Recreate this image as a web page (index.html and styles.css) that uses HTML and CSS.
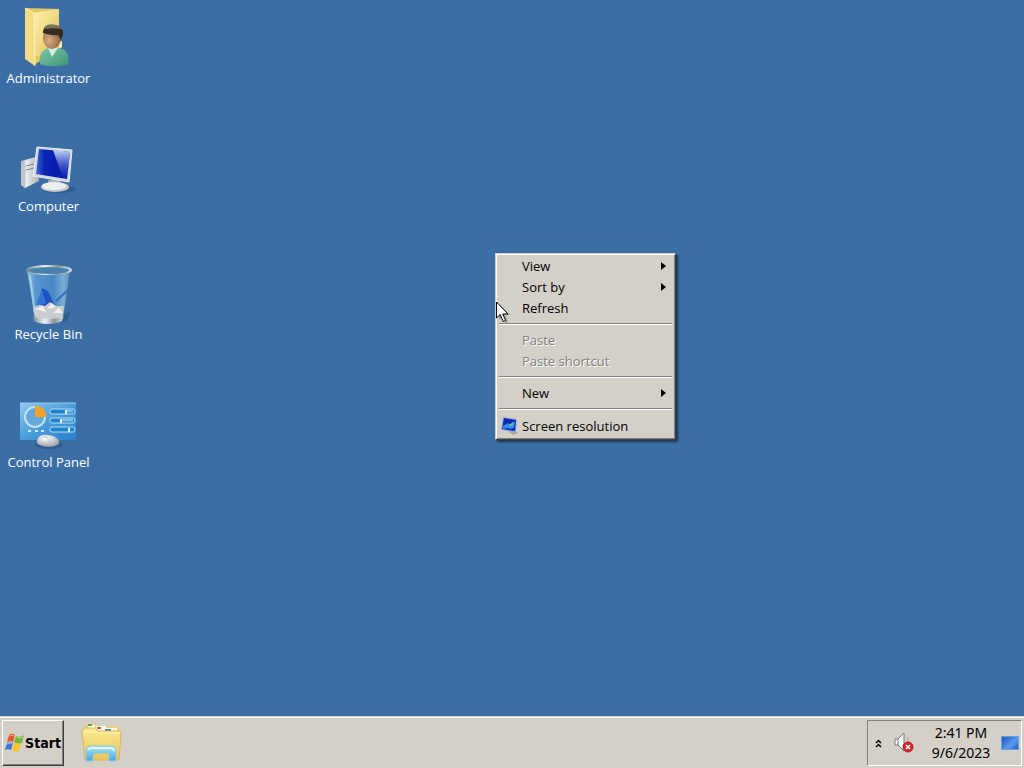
FILE: index.html
```
<!DOCTYPE html>
<html lang="en">
<head>
    <meta charset="UTF-8">
    <meta name="viewport" content="width=device-width, initial-scale=1.0">
    <title>Desktop</title>
    <link rel="stylesheet" href="styles.css">
</head>
<body>
    <main class="desktop">
        <button class="shortcut">
            <svg width="64" height="64" viewBox="1 0 64 64">
                <defs>
                    <linearGradient id="folder" x1="0" y1="0" x2="1" y2="1">
                        <stop offset="0" stop-color="#fff3b4"/>
                        <stop offset="1" stop-color="#e3bd55"/>
                    </linearGradient>
                    <linearGradient id="shirt" x1="0" y1="0" x2="1" y2="1">
                        <stop offset="0" stop-color="#7cc8a8"/>
                        <stop offset="1" stop-color="#3f9275"/>
                    </linearGradient>
                    <radialGradient id="face" cx=".35" cy=".6" r=".7">
                        <stop offset="0" stop-color="#d9ab80"/>
                        <stop offset="1" stop-color="#8a5c3c"/>
                    </radialGradient>
                </defs>
                <path d="M9 4l34 1v43l-24 12-10-7z" fill="#e6c766"/>
                <path d="M17 9l26-4v47H18z" fill="url(#folder)"/>
                <path d="M43 38l3-1v6l-3 2z" fill="#f6ecb0"/>
                <path d="M24 60c-2-10 3-15 9-16h9c8 1 12 6 10 16-7 3-21 3-28 0z" fill="url(#shirt)"/>
                <path d="M32 44l4 9 6-9z" fill="#d7ece9"/>
                <ellipse cx="36" cy="34" rx="9" ry="11" fill="url(#face)"/>
                <path d="M27 29c0-7 5-9 10-8 7 0 11 4 10 10l-2 5-3-5c-5 1-11-1-15-2z" fill="#352b20"/>
                <path d="M28 25c3-6 14-6 18 0-6-1-12-1-18 0z" fill="#77715f"/>
                <path d="M9 4l9 5 1 53-10-7z" fill="#f3dc84"/>
                <path d="M9 4l9 5 1 53" fill="none" stroke="#fff4b8"/>
            </svg>
            <span>Administrator</span>
        </button>
        <button class="shortcut">
            <svg width="64" height="64" viewBox="1 -3 64 64">
                <defs>
                    <linearGradient id="screen" x1="0" y1="0" x2="1" y2="0">
                        <stop offset="0" stop-color="#3a62d4"/>
                        <stop offset=".25" stop-color="#0c23b4"/>
                        <stop offset="1" stop-color="#0718a5"/>
                    </linearGradient>
                    <linearGradient id="gloss" x1="0" y1="0" x2="0" y2="1">
                        <stop offset="0" stop-color="#d8e8ff" stop-opacity=".9"/>
                        <stop offset="1" stop-color="#3050d0" stop-opacity=".1"/>
                    </linearGradient>
                    <linearGradient id="tower" x1="0" y1="0" x2="1" y2="0">
                        <stop offset="0" stop-color="#8d969c"/>
                        <stop offset=".3" stop-color="#eceeee"/>
                        <stop offset="1" stop-color="#a5adb3"/>
                    </linearGradient>
                </defs>
                <ellipse cx="43" cy="54" rx="17" ry="4" fill="#244d79" opacity=".45"/>
                <path d="M5 26l15-4 3 24-14 7-4-3z" fill="url(#tower)"/>
                <path d="M5 26l4 2v25l-4-3z" fill="#bec4c8"/>
                <path d="M10 31l8-2M10 35l8-2" stroke="#788087"/>
                <path d="M32 45h12l2 8H33z" fill="#a9b0b8"/>
                <ellipse cx="39" cy="52" rx="14" ry="5" fill="#c5c9cd"/>
                <ellipse cx="38" cy="51" rx="12" ry="4" fill="#eceeef"/>
                <path d="M21 12l35 3-3 32-36-6z" fill="#cfd6dd" stroke="#e9eef2"/>
                <path d="M23 14l31 3-3 27-31-5z" fill="url(#screen)"/>
                <path d="M37 15l17 2-3 27-4-1z" fill="url(#gloss)"/>
            </svg>
            <span>Computer</span>
        </button>
        <button class="shortcut">
            <svg width="64" height="64" viewBox="1 0 64 64">
                <defs>
                    <linearGradient id="glass" x1="0" y1="0" x2="1" y2="0">
                        <stop offset="0" stop-color="#a8d4ee"/>
                        <stop offset=".2" stop-color="#5d9dd7"/>
                        <stop offset=".6" stop-color="#4a8bcc"/>
                        <stop offset=".85" stop-color="#86b9df"/>
                        <stop offset="1" stop-color="#5f93bf"/>
                    </linearGradient>
                    <linearGradient id="metal" x1="0" y1="0" x2="1" y2="0">
                        <stop offset="0" stop-color="#7e8e98"/>
                        <stop offset=".4" stop-color="#f3f5f5"/>
                        <stop offset=".7" stop-color="#88939b"/>
                        <stop offset="1" stop-color="#d4dde1"/>
                    </linearGradient>
                </defs>
                <path d="M47 54l8-3-3 9-9 3z" fill="#24496f" opacity=".45"/>
                <path d="M11 10h43l-7 49c-6 4-22 4-28 0z" fill="url(#glass)" opacity=".85"/>
                <path d="M23 44l3-16 6 3 4 9 3 5-5 3z" fill="#1c53c4"/>
                <path d="M21 42l5-12 4 13-8 3z" fill="#3474d8"/>
                <path d="M40 41l11-10" stroke="#356eb4" stroke-width="2"/>
                <path d="M17 47l7-2 5 1 5-4 6 4 8 0-2 13H19z" fill="#cbcdce"/>
                <path d="M19 49l8-3 3 6zM31 49l5-6 4 4zM37 53l6-5 4 5z" fill="#f4f0e9"/>
                <path d="M17 56c7 4 24 4 30 0l-1 5c-6 4-22 4-28 0z" fill="url(#metal)"/>
                <ellipse cx="33" cy="10" rx="22" ry="4" fill="#5688ad" stroke="url(#metal)" stroke-width="2"/>
                <ellipse cx="33" cy="11" rx="19" ry="3" fill="#4a80ae"/>
                <path d="M14 16l5 38" stroke="#b3dbed" stroke-width="2" opacity=".7"/>
            </svg>
            <span>Recycle Bin</span>
        </button>
        <button class="shortcut">
            <svg width="64" height="64" viewBox="1 -3 64 64">
                <defs>
                    <linearGradient id="panel" x1="0" y1="0" x2="1" y2="1">
                        <stop offset="0" stop-color="#8fc8ed"/>
                        <stop offset=".5" stop-color="#4b9edc"/>
                        <stop offset="1" stop-color="#2980c9"/>
                    </linearGradient>
                    <radialGradient id="mouse" cx=".4" cy=".3" r=".7">
                        <stop offset="0" stop-color="#ffffff"/>
                        <stop offset="1" stop-color="#9da2ab"/>
                    </radialGradient>
                </defs>
                <path d="M4 12h56v37H4z" fill="url(#panel)"/>
                <path d="M4 12h56" stroke="#9ccbe9"/>
                <circle cx="19" cy="26" r="10" fill="#65a9db" stroke="#c1e2f3" stroke-width="2"/>
                <path d="M19 26V15c6 0 12 4 11 11z" fill="#f5a126"/>
                <path d="M12 40h3M19 40h3M25 40h3" stroke="#d4ecfa" stroke-width="2"/>
                <g fill="#1f83c9" stroke="#b7ddf3">
                    <rect x="34" y="18" width="25" height="5" rx="2"/>
                    <rect x="34" y="27" width="25" height="5" rx="2"/>
                    <rect x="34" y="36" width="25" height="5" rx="2"/>
                </g>
                <path d="M50 20h7M46 29h11" stroke="#7abce6" stroke-width="3"/>
                <path d="M53 37v4M45 28v4M50 19v4" stroke="#e2f4fd" stroke-width="2"/>
                <ellipse cx="33" cy="54" rx="14" ry="4" fill="#214e78" opacity=".5"/>
                <path d="M21 50c1-6 6-7 11-6 6 0 12 4 11 8-2 5-18 5-22 0z" fill="url(#mouse)"/>
                <path d="M27 45c4 1 7 3 9 9" fill="none" stroke="#bfc2c8"/>
            </svg>
            <span>Control Panel</span>
        </button>

        <div class="context-menu" role="menu">
            <button class="item submenu" role="menuitem">View</button>
            <button class="item submenu" role="menuitem">Sort by</button>
            <button class="item" role="menuitem">Refresh</button>
            <hr>
            <button class="item" role="menuitem" disabled>Paste</button>
            <button class="item" role="menuitem" disabled>Paste shortcut</button>
            <hr>
            <button class="item submenu" role="menuitem">New</button>
            <hr>
            <button class="item with-icon" role="menuitem">
                <svg width="18" height="18" viewBox="0 0 18 18">
                    <path d="M7 14l7-1 3 3-5 2z" fill="#a9a79d"/>
                    <path d="M2 0l14 2-1 13-15-2z" fill="#8fa9d8"/>
                    <path d="M3 1l12 2-1 11-13-2z" fill="#0c27ba"/>
                    <path d="M2 9l5-3 2 2 5-4-1 7-4 1-2-1-5 1z" fill="#2f8fe8"/>
                    <path d="M8 8l4-3v3l-3 1z" fill="#6fd08a"/>
                </svg>
                Screen resolution
            </button>
        </div>

        <svg class="cursor" width="14" height="22" viewBox="0 0 14 22">
            <path d="M3 3v16l4-4 3 7 2-1-3-7h5z" fill="#000" opacity=".25"/>
            <path d="M.5 1v16l3.700-3.500 3 7 2.500-1-3-6.500h5.300z" fill="#fff" stroke="#000"/>
        </svg>
    </main>

    <footer class="taskbar">
        <button class="start">
            <svg width="20" height="20" viewBox="0 0 20 20">
                <path d="M4 2c2-2 4-1 6 0L8 9C6 8 4 8 2 9z" fill="#e8552b"/>
                <path d="M11 3c3 1 5 1 8-1l-2 8c-3 1-5 1-8-1z" fill="#78b637"/>
                <path d="M2 10c2-1 4-1 6 0l-2 7c-2-1-4-1-6 0z" fill="#3d79ce"/>
                <path d="M9 10c3 1 5 1 7 0l-2 8c-3 1-5 1-7-1z" fill="#f7c52e"/>
                <path d="M4 3c2-1 3-1 5 0M12 4c2 1 4 1 6 0M2 11c2-1 4-1 5 0" fill="none" stroke="#fff" opacity=".5"/>
            </svg>
            Start
        </button>
        <button class="explorer" aria-label="Windows Explorer">
            <svg width="42" height="42" viewBox="0 0 42 42">
                <defs>
                    <linearGradient id="files" x1="0" y1="0" x2="0" y2="1">
                        <stop offset="0" stop-color="#fbe993"/>
                        <stop offset="1" stop-color="#e8c65b"/>
                    </linearGradient>
                    <linearGradient id="stand" x1="0" y1="0" x2="0" y2="1">
                        <stop offset="0" stop-color="#b5e2f3"/>
                        <stop offset=".5" stop-color="#79c4e8"/>
                        <stop offset="1" stop-color="#4da4d9"/>
                    </linearGradient>
                </defs>
                <path d="M4 4l2-2h9l2 2h20l2 6H3z" fill="#ead27c"/>
                <path d="M7 3h7v4H7zM15 4h10v5H15zM25 6h11v4H25z" fill="#fffdf0"/>
                <path d="M7 2h4v2H7z" fill="#61a546"/>
                <path d="M16 5h4v2h-4z" fill="#db4b3a"/>
                <path d="M24 7h3v2h-3z" fill="#459b8d"/>
                <path d="M27 7h3v2h-3z" fill="#407fc3"/>
                <path d="M1 9l2-3h11l3 3h22l1 3-2 26H4z" fill="url(#files)" stroke="#d8b854"/>
                <path d="M3 10h13M18 11h21" stroke="#fff5b6"/>
                <path d="M5 28c0-3 2-4 4-4h22c3 0 4 1 4 4v11h-7v-5c0-2-1-3-3-3H15c-2 0-3 1-3 3v5H5z" fill="url(#stand)" stroke="#83cce8"/>
                <path d="M7 28c1-2 2-2 4-2h18c3 0 4 1 4 3" fill="none" stroke="#e1f6fb" stroke-width="2"/>
            </svg>
        </button>
        <div class="tray">
            <button class="chevron" aria-label="Show hidden icons">
                <svg width="7" height="9" viewBox="0 0 7 9">
                    <path d="M1 4l2.500-2.500L6 4M1 8l2.500-2.500L6 8" fill="none" stroke="#000" stroke-width="1.500"/>
                </svg>
            </button>
            <button class="volume" aria-label="Volume">
                <svg width="20" height="22" viewBox="0 0 20 22">
                    <path d="M1 7h3l6-6v18l-6-6H1z" fill="#fff" stroke="#77756f"/>
                    <path d="M4 7v6" stroke="#77756f"/>
                    <path d="M13 5q2 3 1 6" fill="none" stroke="#aaa69d"/>
                    <circle cx="14" cy="15" r="5" fill="#d5292f" stroke="#b81d25"/>
                    <path d="M12 13l4 4M16 13l-4 4" stroke="#fff" stroke-width="1.500"/>
                </svg>
            </button>
            <time class="clock" datetime="2023-09-06T14:41">
                <span>2:41 PM</span>
                <span>9/6/2023</span>
            </time>
            <button class="show-desktop" aria-label="Show desktop"></button>
        </div>
    </footer>
</body>
</html>
```
FILE: styles.css
```
:root {
    --desktop: #3a6ea5;
    --face: #d4d0c8;
    --shadow: #808080;
    --dark: #404040;
}
* {
    box-sizing: border-box;
}
body {
    display: flex;
    flex-direction: column;
    height: 100vh;
    margin: 0;
    background: var(--desktop);
    font: 14px/20px "DejaVu Sans Condensed", "Noto Sans", sans-serif;
    overflow: hidden;
}
button {
    margin: 0;
    padding: 0;
    border: 0;
    background: none;
    color: inherit;
    font: inherit;
}
svg {
    display: block;
    flex: none;
}
.desktop {
    position: relative;
    flex: 1;
    display: flex;
    flex-direction: column;
    align-items: flex-start;
    gap: 40px;
    padding-top: 4px;
}
.shortcut {
    display: flex;
    flex-direction: column;
    align-items: center;
    width: 97px;
    height: 88px;
    color: #fff;
    font-family: "Open Sans", sans-serif;
    font-size: 13px;
    white-space: nowrap;
}
.context-menu {
    position: absolute;
    left: 495px;
    top: 253px;
    width: 181px;
    padding: 2px;
    background: var(--face);
    border: 1px solid;
    border-color: var(--face) var(--dark) var(--dark) var(--face);
    box-shadow: inset 1px 1px #fff, inset -1px -1px var(--shadow), 2px 2px 2px rgba(0, 0, 0, 0.5);
    font-family: "Open Sans", sans-serif;
    font-size: 13px;
}
.item {
    display: flex;
    align-items: center;
    width: 100%;
    height: 21px;
    padding-bottom: 2px;
    padding-left: 24px;
    text-align: left;
    white-space: nowrap;
}
.item:disabled {
    color: var(--shadow);
    text-shadow: 1px 1px #fff;
}
.submenu::after {
    content: "";
    margin-left: auto;
    margin-right: 7px;
    border: solid transparent;
    border-width: 4px 0 4px 5px;
    border-left-color: #000;
}
.with-icon {
    gap: 3px;
    height: 22px;
    padding-bottom: 0;
    padding-left: 3px;
}
.context-menu hr {
    margin: 4px 1px 5px;
    border: 0;
    border-top: 1px solid var(--shadow);
    border-bottom: 1px solid #fff;
}
.cursor {
    position: absolute;
    left: 496px;
    top: 301px;
}
.taskbar {
    display: flex;
    align-items: stretch;
    height: 52px;
    padding: 4px 2px 2px;
    background: var(--face);
    box-shadow: inset 0 1px var(--face), inset 0 2px #fff;
}
.start {
    display: flex;
    align-items: center;
    justify-content: center;
    width: 62px;
    border: 1px solid;
    border-color: #fff var(--dark) var(--dark) #fff;
    box-shadow: inset -1px -1px var(--shadow);
    font-weight: bold;
}
.explorer {
    display: flex;
    align-items: center;
    margin-left: 17px;
}
.tray {
    display: flex;
    align-items: center;
    margin-left: auto;
    padding: 0 2px 0 7px;
    border: 1px solid;
    border-color: var(--shadow) #fff #fff var(--shadow);
}
.volume {
    margin-left: 12px;
}
.clock {
    display: flex;
    flex-direction: column;
    align-items: center;
    width: 74px;
    margin-left: 10px;
    font-family: "Noto Sans", sans-serif;
}
.show-desktop {
    width: 18px;
    height: 14px;
    margin-left: 3px;
    border: 1px solid #6c9fe0;
    background: linear-gradient(135deg, #1c55c4, #5b9bec 60%, #1f5cc8);
}
```
